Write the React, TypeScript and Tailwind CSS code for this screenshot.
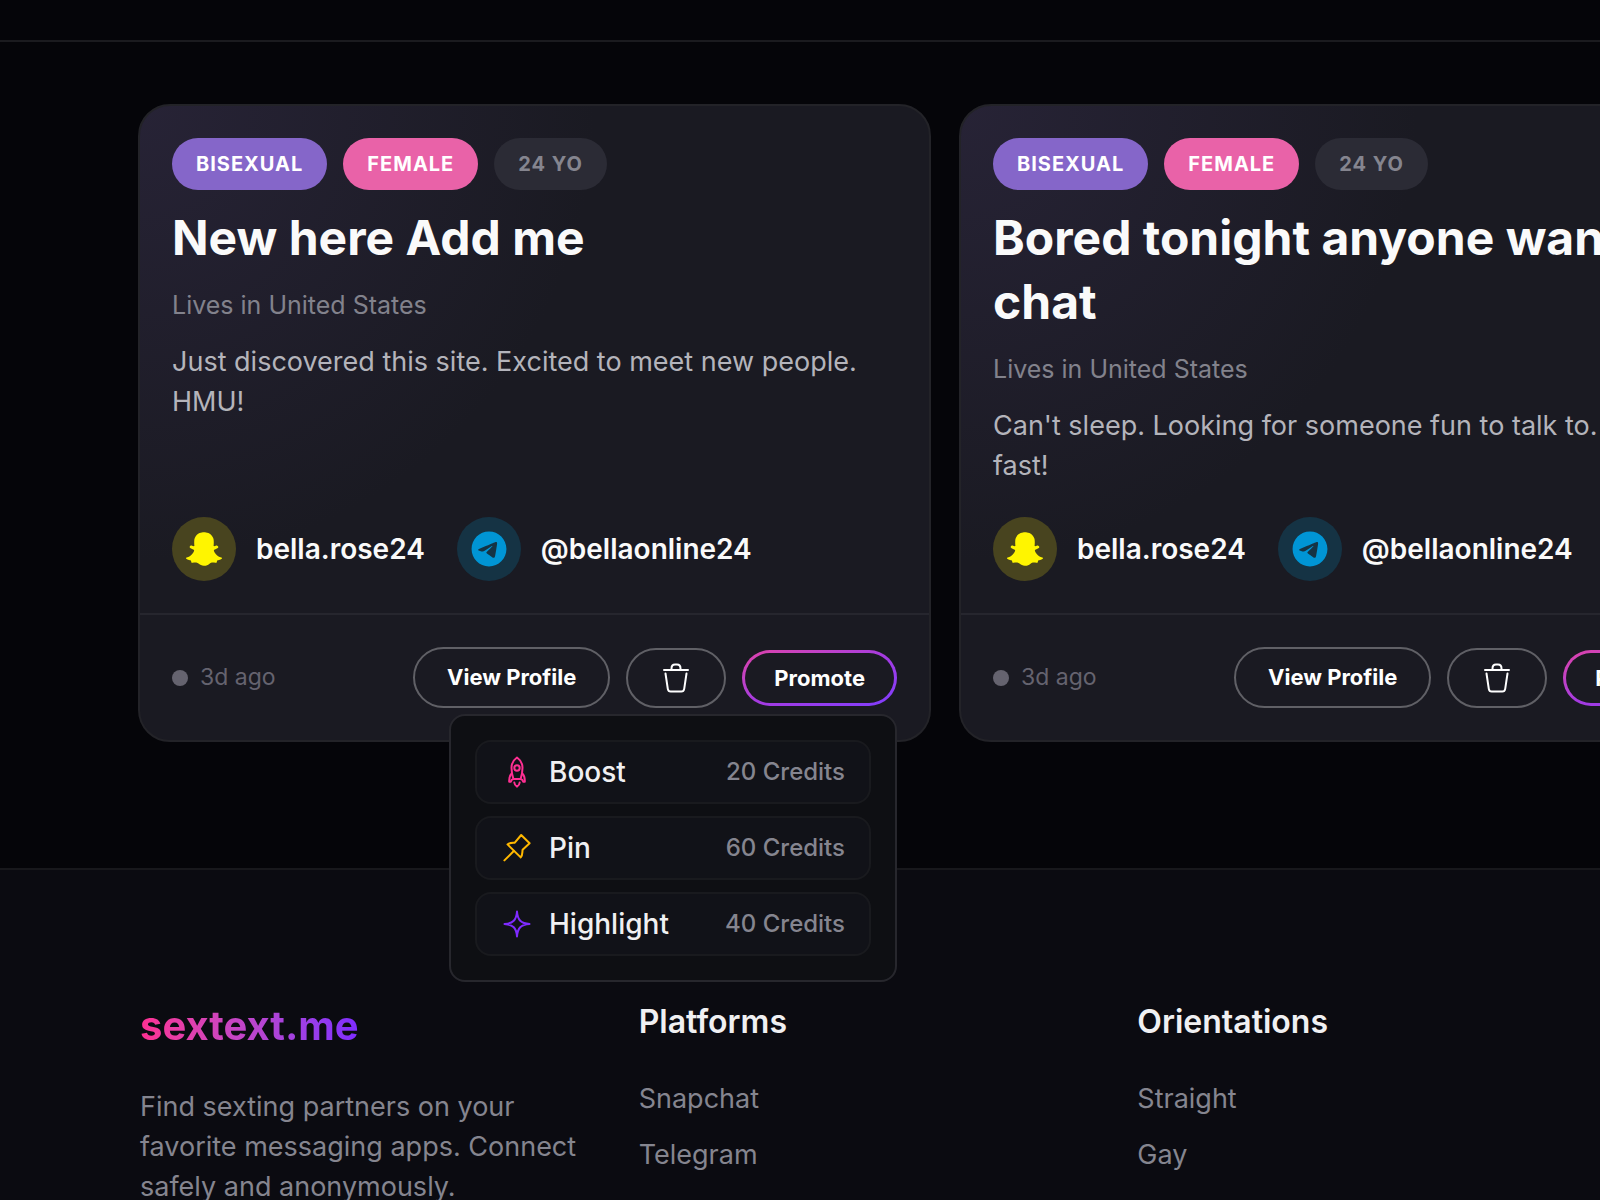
import { SiSnapchat } from "react-icons/si";
import { FaTelegram } from "react-icons/fa6";

type Offer = { name: string; cost: string; icon: React.ReactNode };
type Profile = {
  id: string;
  title: string;
  description: string;
  menuOpen?: boolean;
};

const offers: Offer[] = [
  { name: "Boost", cost: "20 Credits", icon: <RocketIcon /> },
  { name: "Pin", cost: "60 Credits", icon: <PinIcon /> },
  { name: "Highlight", cost: "40 Credits", icon: <SparkIcon /> },
];

const profiles: Profile[] = [
  {
    id: "new-here",
    title: "New here Add me",
    description: "Just discovered this site. Excited to meet new people. HMU!",
    menuOpen: true,
  },
  {
    id: "bored-tonight",
    title: "Bored tonight anyone wanna chat",
    description: "Can't sleep. Looking for someone fun to talk to. I reply fast!",
  },
];

const linkGroups = [
  { heading: "Platforms", links: ["Snapchat", "Telegram"] },
  { heading: "Orientations", links: ["Straight", "Gay"] },
];

function RocketIcon() {
  return (
    <svg className="size-8 text-[#ff2f92]" viewBox="0 0 28 32" fill="none" stroke="currentColor" strokeWidth="2" strokeLinecap="round" strokeLinejoin="round" aria-hidden="true">
      <path d="M14 1.500C10.500 4 8.500 7.600 8.500 11.800c0 4 .7 7.700 1.900 11.200h7.200c1.200-3.500 1.900-7.200 1.900-11.200 0-4.200-2-7.800-5.500-10.300Z" />
      <circle cx="14" cy="12" r="2.700" />
      <path d="M8.700 17.500c-1.700 1.600-2.700 3.300-2.500 8.200h1.600c.4-1.500 1.300-2.500 2.800-2.700M19.300 17.500c1.700 1.600 2.700 3.300 2.500 8.200h-1.600c-.4-1.500-1.300-2.500-2.800-2.700" />
      <path d="M11.300 26.500c.2 2 1.200 3.300 2.700 4.200 1.500-.9 2.500-2.200 2.700-4.200" />
    </svg>
  );
}

function PinIcon() {
  return (
    <svg className="size-8 text-[#ffb800]" viewBox="0 0 28 32" fill="none" stroke="currentColor" strokeWidth="2" strokeLinecap="round" strokeLinejoin="round" aria-hidden="true">
      <path d="M18.200 3 26.600 11.300 19.600 17.800c-.5 2.600.3 5-1.900 7.600L4.500 12.400c2.300-1.900 4.800-1.500 7.300-1.700Z" />
      <path d="M10.800 19 1.400 28.400" />
    </svg>
  );
}

function SparkIcon() {
  return (
    <svg className="size-8 text-[#7f2bff]" viewBox="0 0 28 32" fill="none" stroke="currentColor" strokeWidth="2" strokeLinecap="round" strokeLinejoin="round" aria-hidden="true">
      <path d="M14 3.500c.6 8.600 3.900 11.900 12.500 12.500-8.600.6-11.900 3.900-12.500 12.500C13.400 19.900 10.100 16.600 1.500 16 10.100 15.400 13.400 12.100 14 3.500Z" />
    </svg>
  );
}

function TrashIcon() {
  return (
    <svg className="size-8" viewBox="0 0 32 32" fill="none" stroke="currentColor" strokeWidth="2" strokeLinecap="round" strokeLinejoin="round" aria-hidden="true">
      <path d="M4 8h24M11.500 8V6.500C11.500 4 12.800 2.500 15 2.500h2c2.200 0 3.500 1.500 3.500 4V8M5.500 11.500l2.300 15.300c.3 1.700 1.200 2.700 2.900 2.700h10.600c1.700 0 2.600-1 2.900-2.700l2.300-15.300" />
    </svg>
  );
}

function PromoteMenu() {
  return (
    <ul className="absolute top-full right-0 z-10 mt-2 flex w-112 flex-col gap-3 rounded-2xl border-2 border-[#27272d] bg-[#0e0f13] p-6">
      {offers.map((offer) => (
        <li key={offer.name}>
          <button type="button" className="flex h-16 w-full items-center rounded-2xl border-2 border-[#191a1e] bg-[#111218] px-6">
            {offer.icon}
            <span className="ml-4 text-[28px] font-medium text-[#f0f0f2]">{offer.name}</span>
            <span className="ml-auto text-[24px] font-medium text-[#85858f]">{offer.cost}</span>
          </button>
        </li>
      ))}
    </ul>
  );
}

function ProfileCard({ profile }: { profile: Profile }) {
  return (
    <article className="flex min-w-0 flex-col rounded-4xl border-2 border-[#232328] bg-[#1a1a22] bg-[radial-gradient(circle_at_top_left,#272336_0%,#1a1a22_45%)]">
      <div className="flex grow flex-col px-8 pt-8 pb-8">
        <div className="flex gap-4 text-[20px] leading-[52px] font-bold tracking-wider">
          <span className="rounded-full bg-[#8566c9] px-6 text-white">BISEXUAL</span>
          <span className="rounded-full bg-[#e962a8] px-6 text-white">FEMALE</span>
          <span className="rounded-full bg-[#2b2b35] px-6 text-[#85858f]">24 YO</span>
        </div>
        <h2 className="mt-4 text-[48px] leading-16 font-bold text-[#fafafa]">{profile.title}</h2>
        <p className="mt-4 text-[25px] leading-[38px] text-[#82828c]">Lives in United States</p>
        <p className="mt-[18px] text-[27px] leading-10 text-[#b4b4bb]">{profile.description}</p>
        <div className="mt-auto flex gap-8 pt-[31px] text-[28px] font-semibold text-[#fafafa]">
          <a href="#snapchat" className="flex items-center gap-5">
            <span className="flex size-16 items-center justify-center rounded-full bg-[#48441f]">
              <SiSnapchat className="size-9 text-[#fff500]" />
            </span>
            bella.rose24
          </a>
          <a href="#telegram" className="flex items-center gap-5">
            <span className="flex size-16 items-center justify-center rounded-full bg-[#153344]">
              <FaTelegram className="size-9 text-[#0095d5]" />
            </span>
            @bellaonline24
          </a>
        </div>
      </div>
      <footer className="flex items-center border-t-2 border-[#26262e] p-8">
        <span className="size-4 rounded-full bg-[#65636f]" />
        <time className="ml-3 text-[23px] text-[#65636f]">3d ago</time>
        <div className="ml-auto flex items-center gap-4 text-[22px] font-bold text-white">
          <button type="button" className="h-[61px] rounded-full border-2 border-[#606066] px-8">View Profile</button>
          <button type="button" aria-label="Delete" className="flex h-15 w-25 items-center justify-center rounded-full border-2 border-[#606066]">
            <TrashIcon />
          </button>
          <div className="relative">
            <button type="button" className="block rounded-full bg-linear-to-br from-[#e040a8] via-[#a63ae0] to-[#7f3cff] p-[3px]">
              <span className="block h-[50px] rounded-full bg-[#1a1a22] px-[29px] leading-[50px]">Promote</span>
            </button>
            {profile.menuOpen && <PromoteMenu />}
          </div>
        </div>
      </footer>
    </article>
  );
}

export default function App() {
  return (
    <div className="h-screen overflow-hidden bg-[#050509] font-['Inter',sans-serif]">
      <header className="h-[42px] border-b-2 border-[#1b1b1f]" />
      <main className="pt-[62px] pb-[126px] pl-[138px]">
        <div className="-mr-38 grid grid-cols-2 gap-7">
          {profiles.map((profile) => (
            <ProfileCard key={profile.id} profile={profile} />
          ))}
        </div>
      </main>
      <footer className="grid grid-cols-3 gap-12 border-t-2 border-[#18181c] bg-[#0b0b11] pt-32 pr-3 pb-32 pl-35">
        <div>
          <a href="#home" className="inline-block bg-linear-to-r from-[#ff2f92] to-[#7f2bff] bg-clip-text text-[40px] leading-14 font-bold text-transparent">
            sextext.me
          </a>
          <p className="mt-[33px] text-[27px] leading-10 text-[#85858f]">
            Find sexting partners on your favorite messaging apps. Connect safely and anonymously.
          </p>
        </div>
        {linkGroups.map((group) => (
          <nav key={group.heading} aria-label={group.heading}>
            <h3 className="text-[32px] leading-12 font-semibold text-[#f0f0f2]">{group.heading}</h3>
            <ul className="mt-[33px] flex flex-col gap-4 text-[27px] leading-10 text-[#85858f]">
              {group.links.map((link) => (
                <li key={link}>
                  <a href="#browse">{link}</a>
                </li>
              ))}
            </ul>
          </nav>
        ))}
      </footer>
    </div>
  );
}
